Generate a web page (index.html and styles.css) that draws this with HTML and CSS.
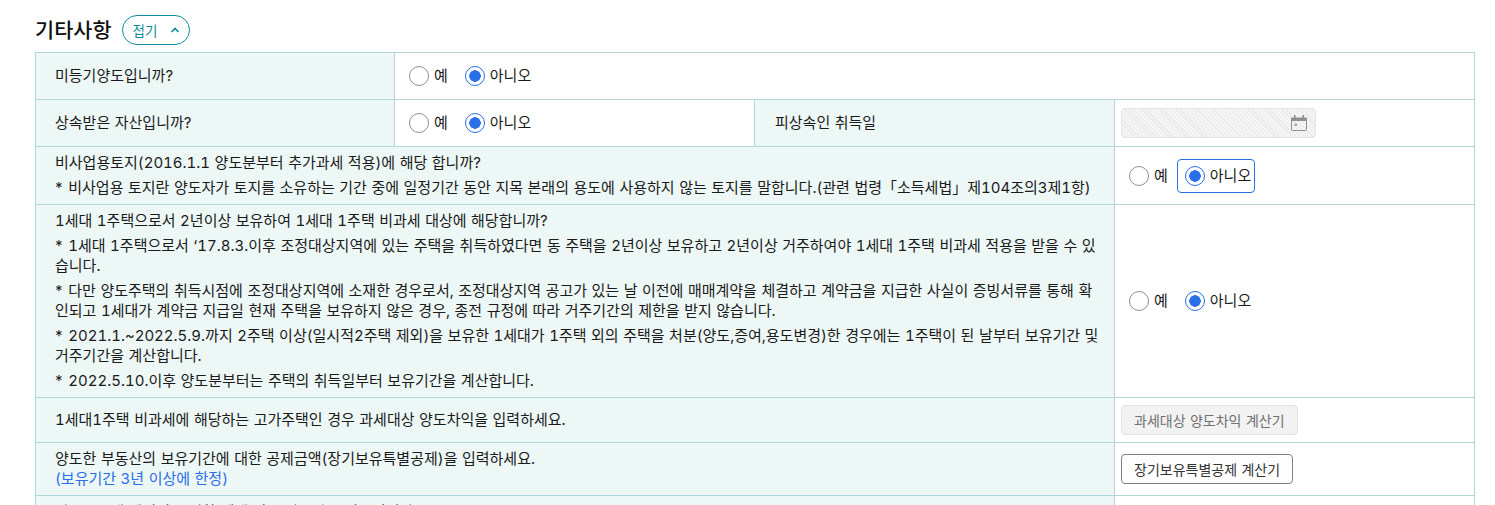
FILE: index.html
```html
<!DOCTYPE html>
<html>
<head>
<title>기타사항</title>
<meta charset="UTF-8">
<link rel="stylesheet" href="styles.css">
</head>
<body>
<div class="section-head">
<h3>기타사항</h3>
<button class="fold-btn">접기
<svg width="10" height="6" viewBox="0 0 10 6"><path d="M1.5 5L5 1.5L8.5 5" fill="none" stroke="#0e8c9c" stroke-width="1.6"/></svg>
</button>
</div>
<table class="form-table">
<colgroup>
<col class="col-a"><col class="col-b"><col class="col-c"><col class="col-d">
</colgroup>
<tr class="h47">
<th>미등기양도입니까?</th>
<td colspan="3">
<div class="radios">
<label class="radio"><i class="dot"></i>예</label>
<label class="radio"><i class="dot on"></i>아니오</label>
</div>
</td>
</tr>
<tr class="h47">
<th>상속받은 자산입니까?</th>
<td>
<div class="radios">
<label class="radio"><i class="dot"></i>예</label>
<label class="radio"><i class="dot on"></i>아니오</label>
</div>
</td>
<th class="mid-label">피상속인 취득일</th>
<td>
<div class="date-input">
<svg width="18" height="18" viewBox="0 0 18 18"><path d="M1 4.500a1 1 0 0 1 1-1h14a1 1 0 0 1 1 1V7H1z" fill="#8f8f8f"/><path d="M1.500 6v9.500a1 1 0 0 0 1 1h13a1 1 0 0 0 1-1V6" fill="none" stroke="#8f8f8f" stroke-width="1"/><rect x="4" y="1" width="1.600" height="3" fill="#8f8f8f"/><rect x="12.400" y="1" width="1.600" height="3" fill="#8f8f8f"/><rect x="4.500" y="9.500" width="2.500" height="2.500" fill="#a5a5a5"/></svg>
</div>
</td>
</tr>
<tr>
<th colspan="3" class="long">
<p>비사업용토지(2016.1.1 양도분부터 추가과세 적용)에 해당 합니까?</p>
<p>* 비사업용 토지란 양도자가 토지를 소유하는 기간 중에 일정기간 동안 지목 본래의 용도에 사용하지 않는 토지를 말합니다.(관련 법령「소득세법」제104조의3제1항)</p>
</th>
<td>
<div class="radios">
<label class="radio"><i class="dot"></i>예</label>
<label class="radio focus"><i class="dot on"></i>아니오</label>
</div>
</td>
</tr>
<tr>
<th colspan="3" class="long">
<p>1세대 1주택으로서 2년이상 보유하여 1세대 1주택 비과세 대상에 해당합니까?</p>
<p>* 1세대 1주택으로서 ‘17.8.3.이후 조정대상지역에 있는 주택을 취득하였다면 동 주택을 2년이상 보유하고 2년이상 거주하여야 1세대 1주택 비과세 적용을 받을 수 있습니다.</p>
<p>* 다만 양도주택의 취득시점에 조정대상지역에 소재한 경우로서, 조정대상지역 공고가 있는 날 이전에 매매계약을 체결하고 계약금을 지급한 사실이 증빙서류를 통해 확인되고 1세대가 계약금 지급일 현재 주택을 보유하지 않은 경우, 종전 규정에 따라 거주기간의 제한을 받지 않습니다.</p>
<p>* 2021.1.~2022.5.9.까지 2주택 이상(일시적2주택 제외)을 보유한 1세대가 1주택 외의 주택을 처분(양도,증여,용도변경)한 경우에는 1주택이 된 날부터 보유기간 및 거주기간을 계산합니다.</p>
<p>* 2022.5.10.이후 양도분부터는 주택의 취득일부터 보유기간을 계산합니다.</p>
</th>
<td>
<div class="radios">
<label class="radio"><i class="dot"></i>예</label>
<label class="radio"><i class="dot on"></i>아니오</label>
</div>
</td>
</tr>
<tr>
<th colspan="3">1세대1주택 비과세에 해당하는 고가주택인 경우 과세대상 양도차익을 입력하세요.</th>
<td class="btn-cell"><button class="btn btn-off">과세대상 양도차익 계산기</button></td>
</tr>
<tr>
<th colspan="3" class="long">양도한 부동산의 보유기간에 대한 공제금액(장기보유특별공제)을 입력하세요.<br><span class="note">(보유기간 3년 이상에 한정)</span></th>
<td class="btn-cell"><button class="btn">장기보유특별공제 계산기</button></td>
</tr>
<tr>
<th colspan="3" class="long">양도소득세 예정신고 기한 내에 신고 납부하는 경우입니까?</th>
<td></td>
</tr>
</table>
</body>
</html>
```

FILE: styles.css
```css
html, body{
    height: 505px;
    overflow: hidden;
}
body{
    margin: 0;
    padding: 0 20px 0 35px;
    font-family: Inter, "Noto Sans CJK KR", sans-serif;
    font-size: 15px;
    font-variant-numeric: tabular-nums;
    word-spacing: 0.500px;
    color: #1a1a1a;
    background: #fff;
}
.section-head{
    display: flex;
    align-items: center;
    height: 52px;
    padding: 15px 0 7px;
    box-sizing: border-box;
}
.section-head h3{
    margin: 0 10px 2px 0;
    font-size: 20.800px;
    font-weight: 500;
    color: #111;
}
.fold-btn{
    display: flex;
    align-items: center;
    justify-content: space-between;
    width: 68px;
    height: 30px;
    padding: 0 9px 0 10px;
    border: 1px solid #0e8c9c;
    border-radius: 15px;
    background: #fff;
    color: #0e8c9c;
    font-family: inherit;
    font-size: 13.500px;
}
.form-table{
    width: 1439px;
    table-layout: fixed;
    border-collapse: collapse;
}
.col-a{ width: 359px; }
.col-b{ width: 360px; }
.col-c{ width: 360px; }
.col-d{ width: 360px; }
.form-table th, .form-table td{
    border: 1px solid #b0d6da;
    padding: 0 6px;
    text-align: left;
    font-weight: 400;
}
.form-table th{
    padding: 0 14px 0 19px;
    background: #edf7f6;
    color: #1a1a1a;
    line-height: 20px;
}
.form-table .mid-label{
    padding-left: 20px;
}
.form-table .long{
    padding: 6px 14px 6px 19px;
}
.long p{
    margin: 0;
}
.long p + p{
    margin-top: 5px;
    text-indent: -1px;
}
.note{
    color: #2a6ee8;
}
.h47{
    height: 47px;
}
.form-table .btn-cell{
    height: 44px;
}
.radios{
    display: flex;
    align-items: center;
    gap: 5px;
}
.radio{
    display: flex;
    align-items: center;
    gap: 5px;
    height: 34px;
    padding: 0 3px 0 7px;
    box-sizing: border-box;
    border: 1px solid transparent;
    border-radius: 4px;
    line-height: 20px;
}
.radio.focus{
    border-color: #2a6ee8;
}
.dot{
    display: block;
    box-sizing: border-box;
    width: 20px;
    height: 20px;
    border: 1px solid #8f8f8f;
    border-radius: 50%;
    background: #fff;
}
.dot.on{
    border-color: #2a6ee8;
    background: radial-gradient(circle, #2a6ee8 0 5.500px, #fff 6px);
}
.date-input{
    display: flex;
    align-items: center;
    justify-content: flex-end;
    box-sizing: border-box;
    width: 195px;
    height: 30px;
    padding-right: 7px;
    border: 1px solid #e4e4e4;
    border-radius: 4px;
    background: repeating-linear-gradient(45deg, #e9e9e9 0 1px, #f5f5f5 1px 3px);
}
.btn{
    height: 30px;
    padding: 0 12px;
    border: 1px solid #808080;
    border-radius: 4px;
    background: #fdfdfd;
    color: #333;
    font-family: inherit;
    font-size: 14px;
    word-spacing: inherit;
}
.btn-off{
    border-color: #e2e2e2;
    background: #f2f2f2;
    color: #707070;
}
```
